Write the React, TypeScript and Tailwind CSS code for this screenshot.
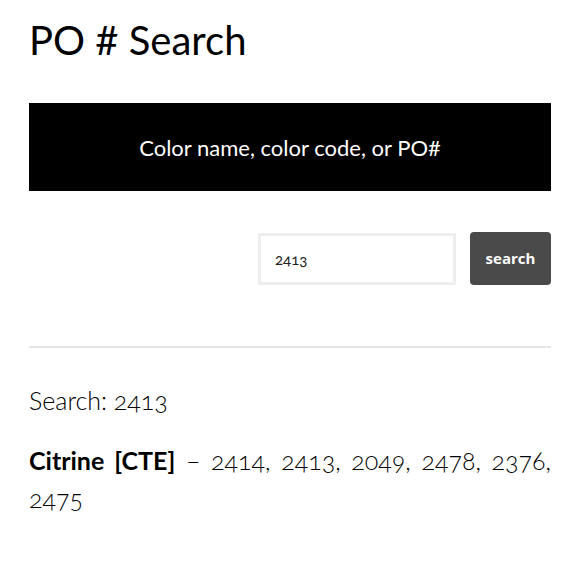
import React, { useState } from 'react';

const results = [{ name: 'Citrine [CTE]', pos: ['2414', '2413', '2049', '2478', '2376', '2475'] }];

export default function App() {
  const [query, setQuery] = useState('2413');

  return (
    <main className="min-h-[580px] bg-white px-[29px] pt-[16px] text-black" style={{ fontFamily: 'Lato, "Open Sans", sans-serif' }}>
      <h1 className="text-[40px] font-normal leading-[48px]">PO # Search</h1>
      <div className="mt-[39px] flex h-[88px] items-center justify-center bg-black">
        <span className="text-[22px] text-white">Color name, color code, or PO#</span>
      </div>
      <form className="mt-[41px] flex items-center justify-end gap-[14px]" onSubmit={(e) => e.preventDefault()}>
        <input
          className="h-[52px] w-[198px] border-[3px] border-[#eeeeee] px-[14px] text-[15px] text-[#222] outline-none oldstyle-nums"
          value={query}
          onChange={(e) => setQuery(e.target.value)}
        />
        <button className="h-[53px] w-[81px] rounded-[4px] bg-[#4a4a4a] text-[15px] font-bold text-white" style={{ fontFamily: '"Open Sans", sans-serif' }}>
          search
        </button>
      </form>
      <hr className="mt-[61px] border-t-2 border-[#e6e6e6]" />
      <p className="mt-[33px] text-[25px] font-light leading-[38px] oldstyle-nums">Search: {query}</p>
      {results.map((r) => (
        <p key={r.name} className="mt-[22px] text-justify text-[25px] font-light leading-[38px] oldstyle-nums">
          <strong className="font-bold">{r.name}</strong> – {r.pos.join(', ')}
        </p>
      ))}
    </main>
  );
}
